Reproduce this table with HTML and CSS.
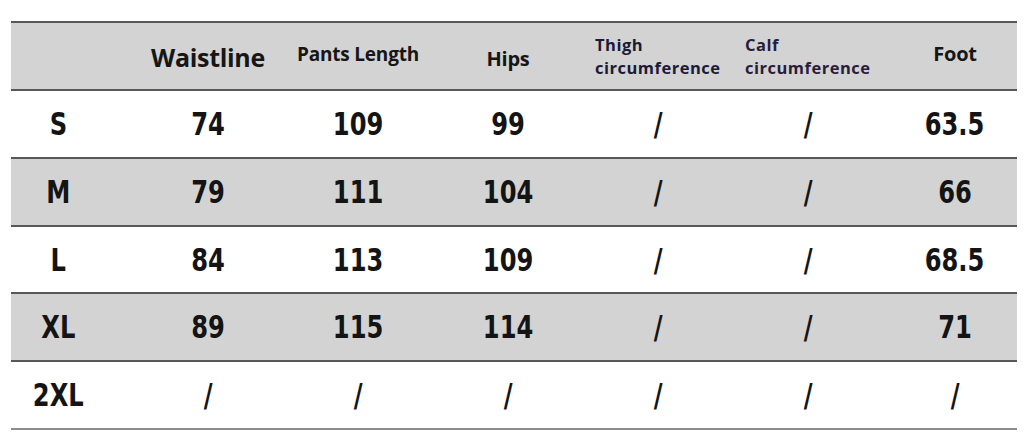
FILE: index.html
```html
<!DOCTYPE html>
<html>
<head>
<meta charset="utf-8">
<link rel="stylesheet" href="styles.css">
</head>
<body>
<div class="table">
  <div class="row head">
    <div class="cell size"></div>
    <div class="cell h-big">Waistline</div>
    <div class="cell h-up">Pants Length</div>
    <div class="cell h-low">Hips</div>
    <div class="cell h-two"><div class="stack"><div>Thigh</div><div>circumference</div></div></div>
    <div class="cell h-two calf"><div class="stack"><div>Calf</div><div>circumference</div></div></div>
    <div class="cell h-up last">Foot</div>
  </div>
  <div class="row">
    <div class="cell size"><span class="v">S</span></div>
    <div class="cell"><span class="v">74</span></div>
    <div class="cell"><span class="v">109</span></div>
    <div class="cell"><span class="v">99</span></div>
    <div class="cell"><span class="v">/</span></div>
    <div class="cell"><span class="v">/</span></div>
    <div class="cell last"><span class="v">63.5</span></div>
  </div>
  <div class="row gray">
    <div class="cell size"><span class="v">M</span></div>
    <div class="cell"><span class="v">79</span></div>
    <div class="cell"><span class="v">111</span></div>
    <div class="cell"><span class="v">104</span></div>
    <div class="cell"><span class="v">/</span></div>
    <div class="cell"><span class="v">/</span></div>
    <div class="cell last"><span class="v">66</span></div>
  </div>
  <div class="row">
    <div class="cell size"><span class="v">L</span></div>
    <div class="cell"><span class="v">84</span></div>
    <div class="cell"><span class="v">113</span></div>
    <div class="cell"><span class="v">109</span></div>
    <div class="cell"><span class="v">/</span></div>
    <div class="cell"><span class="v">/</span></div>
    <div class="cell last"><span class="v">68.5</span></div>
  </div>
  <div class="row gray">
    <div class="cell size"><span class="v">XL</span></div>
    <div class="cell"><span class="v">89</span></div>
    <div class="cell"><span class="v">115</span></div>
    <div class="cell"><span class="v">114</span></div>
    <div class="cell"><span class="v">/</span></div>
    <div class="cell"><span class="v">/</span></div>
    <div class="cell last"><span class="v">71</span></div>
  </div>
  <div class="row end">
    <div class="cell size"><span class="v">2XL</span></div>
    <div class="cell"><span class="v">/</span></div>
    <div class="cell"><span class="v">/</span></div>
    <div class="cell"><span class="v">/</span></div>
    <div class="cell"><span class="v">/</span></div>
    <div class="cell"><span class="v">/</span></div>
    <div class="cell last"><span class="v">/</span></div>
  </div>
</div>
</body>
</html>
```
FILE: styles.css
```css
html, body {
  margin: 0;
  padding: 0;
  background: #ffffff;
}
body {
  padding: 21px 0 0 11px;
}
.table {
  width: 1006px;
}
.row {
  display: grid;
  grid-template-columns: 122px repeat(5, 150px) 134px;
  box-sizing: border-box;
  height: 68px;
  border-top: 2px solid #585858;
  font-family: "DejaVu Sans Condensed", "DejaVu Sans", sans-serif;
  font-stretch: condensed;
  font-weight: 700;
  font-size: 32px;
  color: #141414;
}
.row:nth-child(4), .row:nth-child(6) {
  height: 67px;
}
.row.end {
  border-bottom: 2px solid #8c8c8c;
  height: 70px;
}
.head, .gray {
  background: #d3d3d3;
}
.cell {
  display: flex;
  align-items: center;
  justify-content: center;
}
.cell .v {
  display: inline-block;
  transform: scaleX(0.84);
}
.cell.size {
  padding-right: 28px;
}
.cell.last {
  padding-left: 10px;
}
.head .cell {
  font-family: "Open Sans", "DejaVu Sans", sans-serif;
  font-stretch: normal;
  font-weight: 700;
  font-size: 19px;
  color: #161616;
  letter-spacing: -0.2px;
}
.head .h-big {
  font-size: 25px;
  letter-spacing: -0.3px;
  padding-top: 2px;
}
.head .h-up {
  padding-bottom: 5px;
}
.head .h-low {
  padding-top: 4px;
  font-size: 20px;
}
.head .last {
  font-size: 20px;
}
.head .h-two {
  font-size: 16.5px;
  line-height: 22.5px;
  letter-spacing: 0.5px;
  color: #1c1a36;
  padding-top: 1px;
}
.head .h-two .stack {
  display: flex;
  flex-direction: column;
  align-items: flex-start;
  width: 126px;
}
.head .calf {
  color: #2a1c3a;
}
```
